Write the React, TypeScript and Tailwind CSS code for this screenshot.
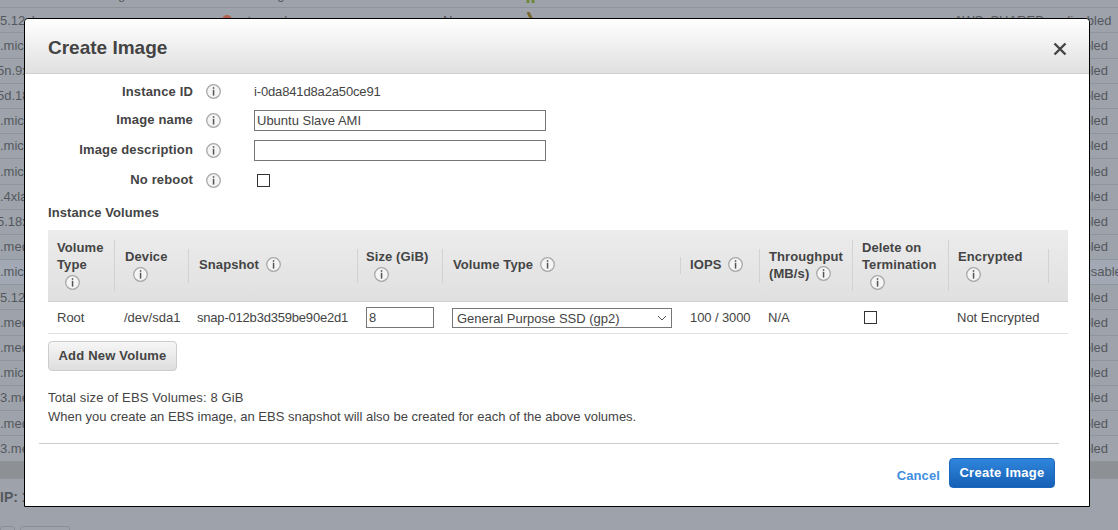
import { ReactNode } from "react";

const leftCells = [
  ".micro", "5n.9xlarge", "5d.18xlarge", ".micro", ".micro", ".micro", ".4xlarge", "5.18xlarge",
  ".medium", ".micro", "5.12xlarge", ".medium", ".medium", ".micro", "3.medium", ".medium", "3.medium",
];

function InfoIcon({ className = "" }: { className?: string }) {
  return (
    <svg width="15" height="15" viewBox="0 0 15 15" className={`shrink-0 ${className}`}>
      <circle cx="7.5" cy="7.5" r="6.8" fill="#f5f5f5" stroke="#a8a8a8" strokeWidth="1.3" />
      <rect x="6.8" y="3.2" width="1.5" height="1.6" fill="#555" />
      <rect x="6.8" y="5.8" width="1.5" height="5.8" fill="#555" />
    </svg>
  );
}

function FormRow({ label, rowClass, children }: { label: string; rowClass: string; children: ReactNode }) {
  return (
    <div className={`flex items-center ${rowClass}`}>
      <div className="w-[168px] text-right text-[13px] font-bold tracking-[0.15px] text-[#444]">{label}</div>
      <InfoIcon className="ml-[13px]" />
      <div className="ml-[33px] flex items-center">{children}</div>
    </div>
  );
}

function HeadCell({ children, divider }: { children: ReactNode; divider: string }) {
  return (
    <div className="flex h-full items-center justify-between pl-[9px]">
      <div className="pb-[2px] text-[13px] leading-[17px] font-bold tracking-[0.1px] text-[#444]">{children}</div>
      <div className={`w-px bg-[#d2d2d2] ${divider}`} />
    </div>
  );
}

function BackgroundRow({ left, active }: { left: string; active?: boolean }) {
  const shifted = left.startsWith("5n") || left.startsWith("5d") || left.startsWith("5.18");
  return (
    <div className={`flex h-[25.2px] items-center justify-between border-b border-[#8f949b] ${active ? "bg-[#a2a9b4]" : ""}`}>
      <span className={shifted ? "-ml-[3px]" : ""}>{left}</span>
      <span className={active ? "mr-[-11px]" : "mr-[10px]"}>disabled</span>
    </div>
  );
}

export default function App() {
  return (
    <div className="relative h-[530px] w-full overflow-hidden bg-[#9ea3ab] font-['Liberation_Sans',Arial,sans-serif] text-[13px] text-[#54585e]">
      {/* table behind the dialog */}
      <div className="-mt-[17px]">
        <div className="grid h-[25.2px] grid-cols-[100px_122px_110px_111px_83px_25px_155px_357px_55px] items-center border-b border-[#8f949b]">
          <span>n.medium</span>
          <span>us-gov-west-1c</span>
          <span className="flex items-center gap-[9px]"><span className="size-[10px] rounded-full bg-[#4f9a3c]" />running</span>
          <span className="flex items-center gap-[9px]"><span className="size-[10px] rounded-full bg-[#4f9a3c]" />2/2 checks</span>
          <span>None</span>
          <svg width="14" height="16" viewBox="0 0 14 16"><path d="M2 0v16M7 0v16" stroke="#6c8a3c" strokeWidth="3" /></svg>
          <span className="whitespace-nowrap">ec2-100-24-162-15.us</span>
          <span>100.24.162.15</span>
          <span>disabled</span>
        </div>
        <div className="grid h-[25.2px] grid-cols-[222px_110px_111px_83px_25px_155px_248px_109px_55px] items-center border-b border-[#8f949b]">
          <span>5.12xlarge</span>
          <span className="flex items-center gap-[9px]"><span className="size-[10px] rounded-full bg-[#b5614d]" />stopped</span>
          <span />
          <span>None</span>
          <svg width="14" height="16" viewBox="0 0 14 16"><path d="M2 0l8 16" stroke="#7a6a30" strokeWidth="3" /></svg>
          <span />
          <span />
          <span>AWS_SHARED</span>
          <span>disabled</span>
        </div>
        {leftCells.map((left, i) => (
          <BackgroundRow key={i} left={left} active={i === 9} />
        ))}
        <div className="h-[17px] border-b border-[#8f949b] bg-[#8d9196]" />
        <div className="mt-[8px] text-[14px] font-bold">IP: 100.24</div>
        <div className="mt-[18px] flex gap-[5px]">
          <div className="h-[20px] w-[15px] rounded-[3px] border border-[#8a8e95]" />
          <div className="h-[20px] w-[50px] rounded-[3px] border border-[#8a8e95]" />
        </div>
      </div>

      {/* dialog */}
      <div className="absolute top-[18px] left-[24px] flex h-[489px] w-[1066px] flex-col rounded-t-[4px] border border-black bg-white text-[#444]">
        <div className="flex h-[55px] shrink-0 items-center justify-between rounded-t-[4px] border-b border-[#cfcfcf] bg-gradient-to-b from-white to-[#e0e0e0] pr-[22px] pl-[23px]">
          <h1 className="pt-[4px] text-[19px] font-bold text-[#444]">Create Image</h1>
          <svg width="14" height="14" viewBox="0 0 14 14" className="mt-[6px]">
            <path d="M1.5 1.5 L12.5 12.5 M12.5 1.5 L1.5 12.5" stroke="#444" strokeWidth="2.4" />
          </svg>
        </div>

        <div className="pt-[4px]">
          <FormRow label="Instance ID" rowClass="h-[27px]">
            <span className="text-[13px] tracking-[-0.15px]">i-0da841d8a2a50ce91</span>
          </FormRow>
          <FormRow label="Image name" rowClass="h-[30px]">
            <input
              defaultValue="Ubuntu Slave AMI"
              className="h-[21px] w-[292px] border border-[#767676] px-[2px] text-[13px] text-[#444] outline-none"
            />
          </FormRow>
          <FormRow label="Image description" rowClass="h-[30px]">
            <input className="h-[21px] w-[292px] border border-[#767676] px-[2px] text-[13px] outline-none" />
          </FormRow>
          <FormRow label="No reboot" rowClass="h-[30px]">
            <div className="ml-[3px] size-[13px] border border-[#333] bg-white" />
          </FormRow>
        </div>

        <div className="mx-[23px] mt-[10px] w-[1020px]">
          <h2 className="text-[13px] leading-[16px] font-bold tracking-[0.1px] text-[#444]">Instance Volumes</h2>

          <div className="mt-[9px] grid h-[72px] grid-cols-[67px_74px_169px_85px_238px_79px_93px_96px_100px_19px] border-b border-[#d0d0d0] bg-gradient-to-b from-[#ececec] to-[#e0e0e0]">
            <HeadCell divider="h-[51px]">
              Volume<br />Type
              <InfoIcon className="mt-[2px] ml-[8px]" />
            </HeadCell>
            <HeadCell divider="h-[34px]">
              <span className="block pl-[1px]">
                Device
                <InfoIcon className="mt-[2px] ml-[8px]" />
              </span>
            </HeadCell>
            <HeadCell divider="h-[34px]">
              <span className="flex items-center gap-[7px] pl-[1px]">Snapshot <InfoIcon /></span>
            </HeadCell>
            <HeadCell divider="h-[34px]">
              <span className="-ml-[1px] block">
                Size (GiB)
                <InfoIcon className="mt-[2px] ml-[8px]" />
              </span>
            </HeadCell>
            <HeadCell divider="h-[17px]">
              <span className="flex items-center gap-[7px] pl-[1px]">Volume Type <InfoIcon /></span>
            </HeadCell>
            <HeadCell divider="h-[34px]">
              <span className="flex items-center gap-[7px]">IOPS <InfoIcon /></span>
            </HeadCell>
            <HeadCell divider="h-[51px]">
              Throughput<br />
              <span className="flex items-center gap-[7px]">(MB/s) <InfoIcon /></span>
            </HeadCell>
            <HeadCell divider="h-[51px]">
              Delete on<br />Termination
              <InfoIcon className="mt-[2px] ml-[8px]" />
            </HeadCell>
            <HeadCell divider="h-[34px]">
              Encrypted
              <InfoIcon className="mt-[2px] ml-[8px]" />
            </HeadCell>
            <div />
          </div>

          <div className="grid h-[32px] grid-cols-[66px_74px_169px_85px_238px_79px_93px_96px_120px] items-center border-b border-[#e0e0e0] text-[13px] text-[#444]">
            <span className="pl-[9px]">Root</span>
            <span className="pl-[10px]">/dev/sda1</span>
            <span className="pl-[9px] tracking-[-0.2px] whitespace-nowrap">snap-012b3d359be90e2d1</span>
            <input
              defaultValue="8"
              className="ml-[9px] h-[21px] w-[68px] border border-[#767676] px-[2px] text-[13px] text-[#444] outline-none"
            />
            <div className="relative ml-[10px] h-[20px] w-[220px]">
              <select className="h-full w-full appearance-none border border-[#767676] bg-white px-[4px] text-[13px] text-[#444] outline-none">
                <option>General Purpose SSD (gp2)</option>
              </select>
              <svg width="10" height="6" viewBox="0 0 10 6" className="absolute top-[7px] right-[5px]">
                <path d="M1 1 L5 5 L9 1" fill="none" stroke="#555" strokeWidth="1" />
              </svg>
            </div>
            <span className="pl-[10px] tracking-[-0.1px]">100 / 3000</span>
            <span className="pl-[9px]">N/A</span>
            <div className="ml-[12px] size-[13px] border border-[#333]" />
            <span className="pl-[9px]">Not Encrypted</span>
          </div>

          <button className="mt-[7px] block h-[30px] w-[129px] rounded-[4px] border border-[#ccc] bg-gradient-to-b from-[#f6f6f6] to-[#dedede] text-[13px] font-bold tracking-[0.2px] text-[#444]">
            Add New Volume
          </button>

          <p className="mt-[17px] text-[13px] leading-[19px]">
            <span className="tracking-[0.13px]">Total size of EBS Volumes: 8 GiB</span><br />
            When you create an EBS image, an EBS snapshot will also be created for each of the above volumes.
          </p>
        </div>

        <div className="mx-[14px] mt-[17px] flex h-[44px] w-[1020px] items-start justify-end gap-[9px] border-t border-[#ccc] pt-[14px] pr-[4px]">
          <button className="mt-[8px] text-[13px] font-bold tracking-[0.1px] text-[#3f8ee0]">Cancel</button>
          <button className="h-[30px] w-[106px] rounded-[4px] border border-[#1b67bb] bg-gradient-to-b from-[#2f86dc] to-[#1560b6] pb-[1px] text-[13px] font-bold tracking-[0.3px] text-white">
            Create Image
          </button>
        </div>
      </div>
    </div>
  );
}
